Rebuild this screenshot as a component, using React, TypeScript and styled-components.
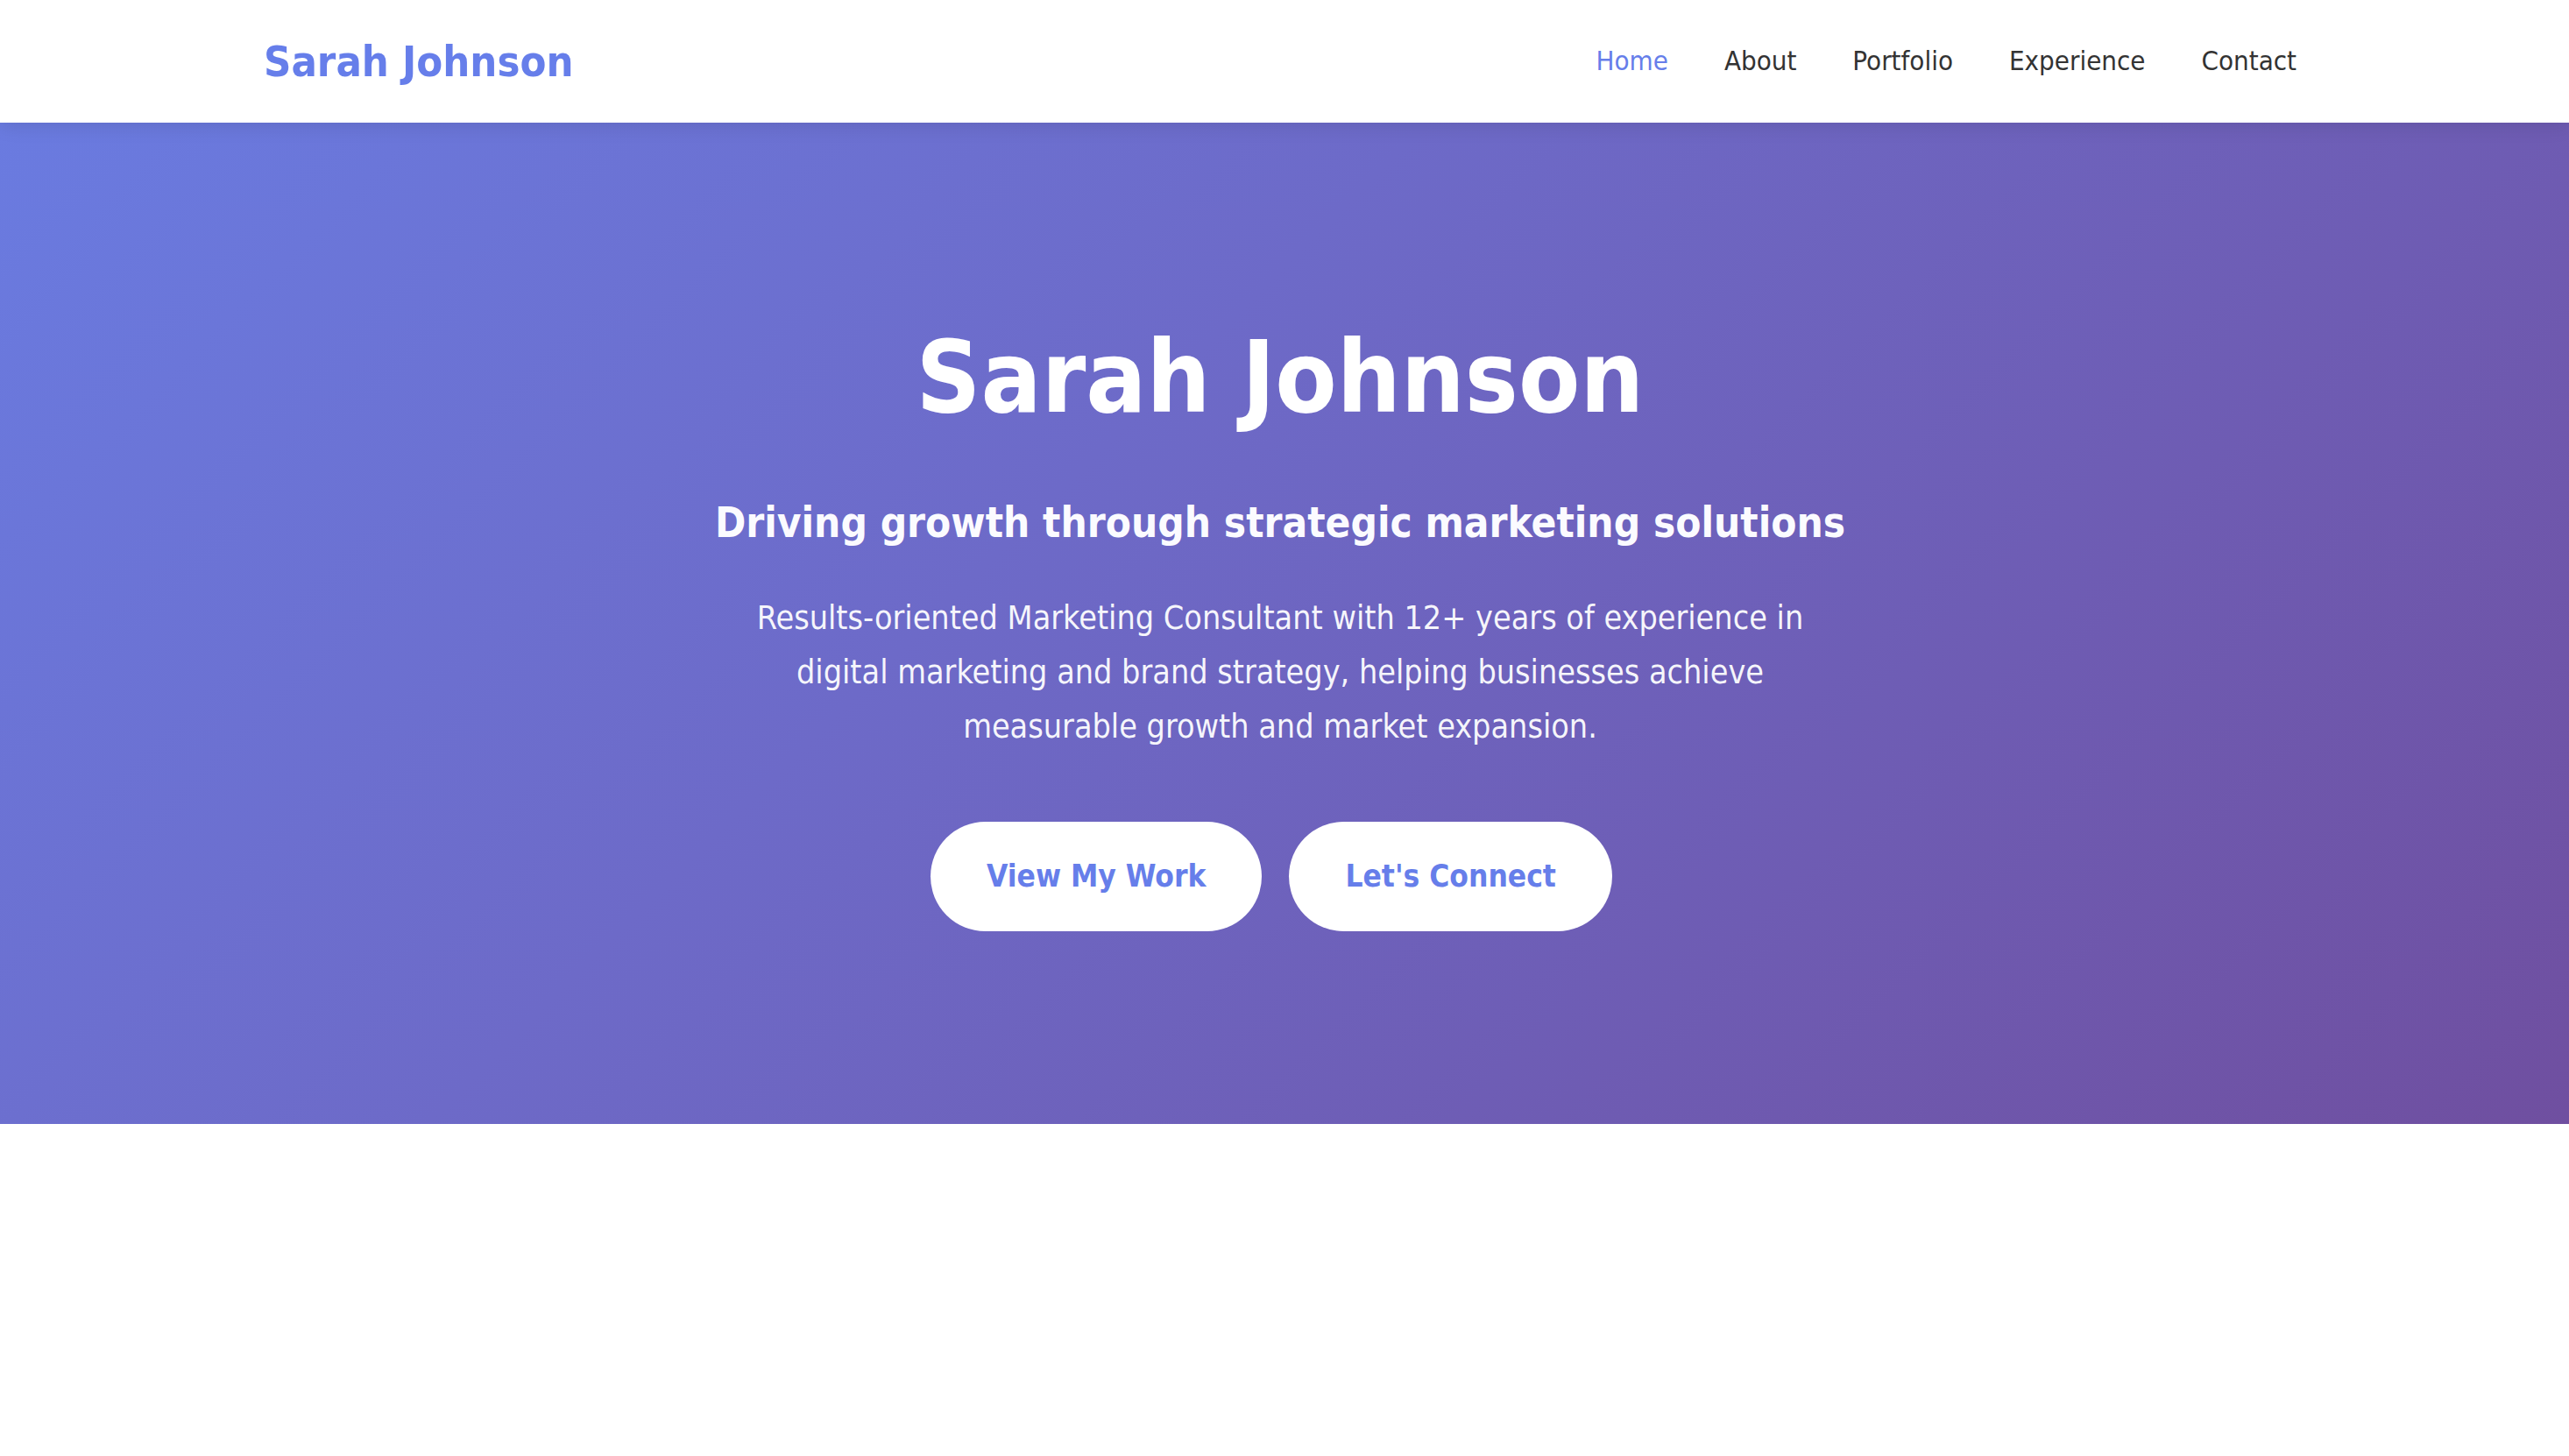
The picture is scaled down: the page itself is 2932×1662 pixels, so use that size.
import React from "react";
import styled, { createGlobalStyle } from "styled-components";

const GlobalStyle = createGlobalStyle`
  * { box-sizing: border-box; margin: 0; padding: 0; }
  html, body { background: #ffffff; }
  body {
    font-family: "DejaVu Sans Condensed", "DejaVu Sans", Tahoma, sans-serif;
    font-stretch: condensed;
    color: #333333;
  }
`;

const Page = styled.div`
  min-height: 1662px;
  background: #ffffff;
`;

const Header = styled.header`
  background: #ffffff;
  box-shadow: 0 4px 20px rgba(0, 0, 0, 0.1);
  position: relative;
  z-index: 2;
  padding-right: 10px;
`;

const Container = styled.div`
  max-width: 2320px;
  margin: 0 auto;
`;

const NavBar = styled(Container)`
  height: 140px;
  display: flex;
  align-items: center;
  justify-content: space-between;
`;

const Logo = styled.a`
  font-size: 48.5px;
  font-weight: 700;
  color: #667eea;
  text-decoration: none;
  line-height: 1.2;
`;

const NavList = styled.nav`
  display: flex;
  align-items: center;
  gap: 64px;
`;

const NavLink = styled.a<{ $active?: boolean }>`
  font-size: 31px;
  line-height: 1.2;
  color: ${(p) => (p.$active ? "#667eea" : "#333333")};
  text-decoration: none;
`;

const Hero = styled.section`
  background: linear-gradient(135deg, #6a7be0 0%, #6d6ac8 40%, #6f4fa0 100%);
  padding: 224px 10px 220px 0;
  color: #ffffff;
  text-align: center;
`;

const HeroInner = styled.div`
  display: flex;
  flex-direction: column;
  align-items: center;
`;

const Title = styled.h1`
  font-size: 114px;
  font-weight: 700;
  line-height: 134px;
  margin-bottom: 70px;
`;

const Subtitle = styled.h2`
  font-size: 47.3px;
  font-weight: 700;
  line-height: 58px;
  margin-bottom: 48px;
  color: #fbfbff;
`;

const Lead = styled.p`
  font-size: 37.4px;
  line-height: 62px;
  max-width: 1300px;
  margin-bottom: 78px;
  color: rgba(255, 255, 255, 0.95);
`;

const Buttons = styled.div`
  display: flex;
  gap: 31px;
  justify-content: center;
  padding-right: 20px;
`;

const Button = styled.a`
  display: inline-block;
  background: #ffffff;
  color: #667eea;
  font-size: 35px;
  font-weight: 700;
  line-height: 45px;
  padding: 40px 64px;
  border-radius: 100px;
  text-decoration: none;
`;

export default function App() {
  return (
    <Page>
      <GlobalStyle />
      <Header>
        <NavBar>
          <Logo href="#">Sarah Johnson</Logo>
          <NavList>
            <NavLink href="#" $active>
              Home
            </NavLink>
            <NavLink href="#">About</NavLink>
            <NavLink href="#">Portfolio</NavLink>
            <NavLink href="#">Experience</NavLink>
            <NavLink href="#">Contact</NavLink>
          </NavList>
        </NavBar>
      </Header>
      <Hero>
        <HeroInner>
          <Title>Sarah Johnson</Title>
          <Subtitle>Driving growth through strategic marketing solutions</Subtitle>
          <Lead>
            Results-oriented Marketing Consultant with 12+ years of experience in
            <br />
            digital marketing and brand strategy, helping businesses achieve
            <br />
            measurable growth and market expansion.
          </Lead>
          <Buttons>
            <Button href="#">View My Work</Button>
            <Button href="#">Let's Connect</Button>
          </Buttons>
        </HeroInner>
      </Hero>
    </Page>
  );
}
